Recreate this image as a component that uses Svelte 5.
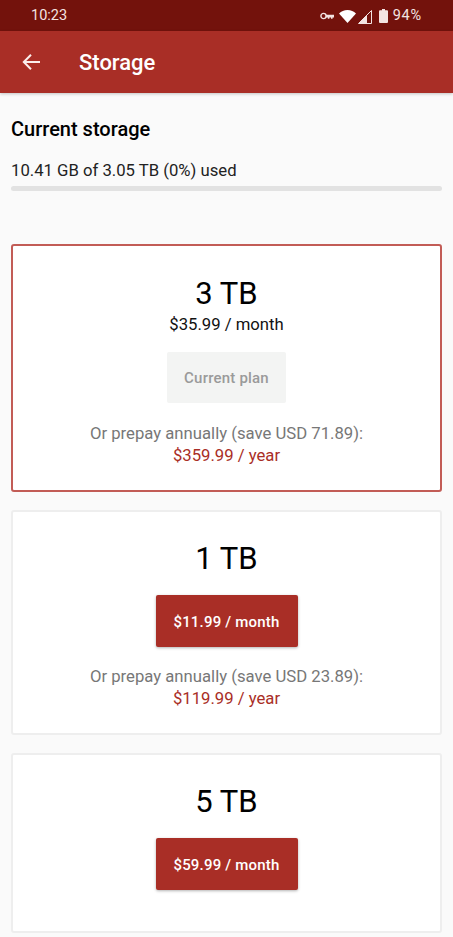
<script lang="ts">
    const plans = [
        { size: "3 TB", monthly: "$35.99 / month", save: "71.89", yearly: "$359.99 / year", current: true },
        { size: "1 TB", monthly: "$11.99 / month", save: "23.89", yearly: "$119.99 / year", current: false },
        { size: "5 TB", monthly: "$59.99 / month", save: "", yearly: "", current: false },
    ];
</script>

<div class="screen">
    <div class="status">
        <span class="time">10:23</span>
        <div class="status-icons">
            <svg class="key" width="14" height="8" viewBox="0 0 14 8">
                <circle cx="3.500" cy="4" r="2.600" fill="none" stroke="#f3e4e2" stroke-width="1.400" />
                <path d="M6 2.800h8v2.600h-1.400v1.400h-1.600V5.400H9.400v1.400H7.800V5.400H6z" fill="#f3e4e2" />
            </svg>
            <svg class="wifi" width="17" height="13" viewBox="0 0 17 13">
                <path d="M0 3.600C2.200 1.400 5.200 0 8.500 0S14.800 1.400 17 3.600L8.500 13z" fill="#fff" />
            </svg>
            <svg class="signal" width="14" height="14" viewBox="0 0 14 14">
                <path d="M13.500 0.500V13.500H0.500z" fill="none" stroke="#f3e4e2" stroke-width="1" />
                <path d="M9 5V13H1z" fill="#f3e4e2" />
            </svg>
            <svg class="battery" width="9" height="14" viewBox="0 0 9 14">
                <path d="M3 0h3v1.200h2a1 1 0 0 1 1 1V13a1 1 0 0 1-1 1H1a1 1 0 0 1-1-1V2.200a1 1 0 0 1 1-1h2z" fill="#f3e4e2" />
            </svg>
            <span class="pct">94%</span>
        </div>
    </div>

    <header class="toolbar">
        <svg width="20" height="20" viewBox="0 0 20 20">
            <path d="M19 10H3M10 2.800 2.800 10l7.200 7.200" fill="none" stroke="#fbeeec" stroke-width="2" />
        </svg>
        <h1>Storage</h1>
    </header>

    <main>
        <h2>Current storage</h2>
        <p class="usage">10.41 GB of 3.05 TB (0%) used</p>
        <div class="bar"></div>

        <div class="plans">
            {#each plans as plan}
                <section class="card" class:current={plan.current} class:monthly-only={!plan.save}>
                    <div class="size">{plan.size}</div>
                    {#if plan.current}
                        <div class="price">{plan.monthly}</div>
                        <button class="btn btn-disabled" disabled>Current plan</button>
                    {:else}
                        <button class="btn btn-buy">{plan.monthly}</button>
                    {/if}
                    {#if plan.save}
                        <div class="prepay">Or prepay annually (save USD {plan.save}):</div>
                        <div class="yearly">{plan.yearly}</div>
                    {/if}
                </section>
            {/each}
        </div>
    </main>
</div>

<style>
    :global(body) {
        margin: 0;
        background: #fafafa;
    }

    .screen {
        width: 453px;
        height: 937px;
        overflow: hidden;
        background: #fafafa;
        font-family: Roboto, "Liberation Sans", sans-serif;
    }

    .status {
        height: 31px;
        box-sizing: border-box;
        background: #73120c;
        color: #f3e4e2;
        display: flex;
        align-items: center;
        justify-content: space-between;
        padding: 0 31px;
        font-size: 14.500px;
    }

    .status-icons {
        display: flex;
        align-items: center;
        gap: 2px;
    }

    .key {
        margin-right: 3px;
    }

    .wifi {
        margin-top: 2px;
    }

    .signal {
        margin-top: 3px;
    }

    .battery {
        margin-left: 5px;
        margin-top: 1px;
    }

    .pct {
        margin-left: 3px;
        letter-spacing: 0.8px;
    }

    .toolbar {
        height: 62px;
        box-sizing: border-box;
        background: #a92e26;
        color: #fff;
        display: flex;
        align-items: center;
        padding-left: 21px;
        gap: 38px;
        box-shadow: 0 1px 3px rgba(0, 0, 0, 0.22);
    }

    .toolbar h1 {
        margin: 1px 0 0;
        font-size: 22px;
        font-weight: 500;
    }

    main {
        padding: 0 11px;
    }

    h2 {
        margin: 25px 0 0;
        font-size: 20px;
        line-height: 22px;
        font-weight: 500;
        color: #000;
    }

    .usage {
        margin: 21px 0 0;
        font-size: 16.700px;
        line-height: 20px;
        color: #222;
    }

    .bar {
        height: 5px;
        margin-top: 5px;
        border-radius: 3px;
        background: #e2e2e2;
    }

    .plans {
        display: flex;
        flex-direction: column;
        gap: 18px;
        margin-top: 53px;
    }

    .card {
        box-sizing: border-box;
        border: 2px solid #eeeeee;
        border-radius: 3px;
        background: #fff;
        display: flex;
        flex-direction: column;
        align-items: center;
        padding: 30px 0 24px;
    }

    .card.current {
        border-color: #c25c56;
        padding-top: 31px;
    }

    .card.monthly-only {
        padding-bottom: 41px;
    }

    .size {
        font-size: 31px;
        line-height: 34px;
        color: #000;
    }

    .price {
        font-size: 16.700px;
        line-height: 20px;
        margin-top: 4px;
        color: #111;
    }

    .btn {
        border: none;
        border-radius: 2px;
        font: inherit;
        font-size: 15px;
        font-weight: 500;
        letter-spacing: 0.2px;
    }

    .btn-disabled {
        width: 119px;
        height: 51px;
        margin-top: 17px;
        margin-bottom: 1px;
        background: #f3f4f3;
        color: #9a9a9a;
    }

    .btn-buy {
        width: 142px;
        height: 52px;
        margin-top: 19px;
        padding-top: 2px;
        background: #a92e26;
        color: #fff;
        box-shadow: 0 1px 3px rgba(0, 0, 0, 0.3);
    }

    .prepay {
        margin-top: 20px;
        font-size: 16.700px;
        line-height: 20px;
        color: #777;
    }

    .yearly {
        margin-top: 2px;
        font-size: 16.700px;
        line-height: 20px;
        color: #a92e26;
    }
</style>
